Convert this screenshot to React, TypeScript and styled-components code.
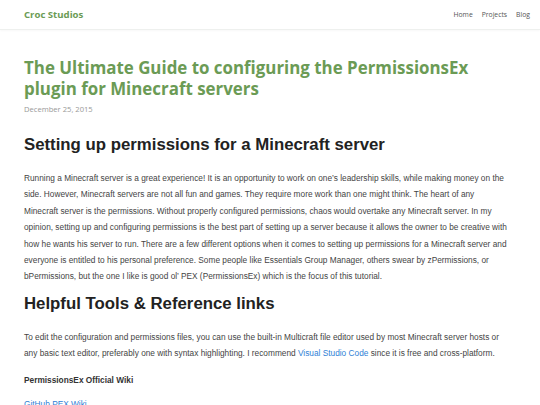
import styled, { createGlobalStyle } from 'styled-components';

const Global = createGlobalStyle`
  html, body { margin: 0; padding: 0; background: #fff; }
  body { font-family: "Liberation Sans", Arial, sans-serif; }
`;

const GREEN = '#6b9b55';

const Header = styled.header`
  display: flex;
  align-items: center;
  justify-content: space-between;
  height: 29px;
  padding: 0 10px 0 24px;
  border-bottom: 1px solid #eef0ee;
  box-shadow: 0 1px 2px rgba(0, 0, 0, 0.03);
`;

const Brand = styled.a`
  font-family: "Open Sans", sans-serif;
  font-weight: 700;
  font-size: 9.6px;
  color: ${GREEN};
  text-decoration: none;
`;

const Nav = styled.nav`
  display: flex;
  gap: 9px;
`;

const NavLink = styled.a`
  font-family: "Open Sans", sans-serif;
  font-size: 6.8px;
  color: #555;
  text-decoration: none;
`;

const Main = styled.main`
  padding: 27px 30px 0 24px;
`;

const Title = styled.h1`
  margin: 0;
  font-family: "Open Sans", sans-serif;
  font-weight: 700;
  font-size: 16.9px;
  line-height: 21px;
  color: ${GREEN};
`;

const DateLine = styled.div`
  margin-top: 5px;
  font-family: "Open Sans", sans-serif;
  font-size: 7.6px;
  line-height: 10px;
  color: #999;
`;

const H2 = styled.h2<{ $gap: number }>`
  margin: ${({ $gap }) => $gap}px 0 0 0;
  font-family: "Liberation Sans", Arial, sans-serif;
  font-weight: 700;
  font-size: 16.8px;
  line-height: 22px;
  color: #222;
`;

const Para = styled.p`
  margin: 14px 0 0 0;
  font-size: 8.3px;
  line-height: 16.4px;
  color: #444;
`;

const Strong = styled.p`
  margin: 10px 0 0 0;
  font-size: 8.3px;
  line-height: 16.4px;
  font-weight: 700;
  color: #333;
`;

const Link = styled.a`
  color: #2f7fd6;
  text-decoration: none;
`;

const LinkLine = styled.div`
  margin-top: 8px;
  font-size: 8.3px;
  line-height: 16.4px;
`;

export default function App() {
  return (
    <>
      <Global />
      <Header>
        <Brand href="#">Croc Studios</Brand>
        <Nav>
          <NavLink href="#">Home</NavLink>
          <NavLink href="#">Projects</NavLink>
          <NavLink href="#">Blog</NavLink>
        </Nav>
      </Header>
      <Main>
        <Title>The Ultimate Guide to configuring the PermissionsEx plugin for Minecraft servers</Title>
        <DateLine>December 25, 2015</DateLine>
        <H2 $gap={20}>Setting up permissions for a Minecraft server</H2>
        <Para>
          Running a Minecraft server is a great experience! It is an opportunity to work on one’s leadership skills, while making money on the side. However, Minecraft servers are not all fun and games. They require more work than one might think. The heart of any Minecraft server is the permissions. Without properly configured permissions, chaos would overtake any Minecraft server. In my opinion, setting up and configuring permissions is the best part of setting up a server because it allows the owner to be creative with how he wants his server to run. There are a few different options when it comes to setting up permissions for a Minecraft server and everyone is entitled to his personal preference. Some people like Essentials Group Manager, others swear by zPermissions, or bPermissions, but the one I like is good ol’ PEX (PermissionsEx) which is the focus of this tutorial.
        </Para>
        <H2 $gap={8}>Helpful Tools &amp; Reference links</H2>
        <Para>
          To edit the configuration and permissions files, you can use the built-in Multicraft file editor used by most Minecraft server hosts or any basic text editor, preferably one with syntax highlighting. I recommend <Link href="#">Visual Studio Code</Link> since it is free and cross-platform.
        </Para>
        <Strong>PermissionsEx Official Wiki</Strong>
        <LinkLine>
          <Link href="#">GitHub PEX Wiki</Link>
        </LinkLine>
      </Main>
    </>
  );
}
